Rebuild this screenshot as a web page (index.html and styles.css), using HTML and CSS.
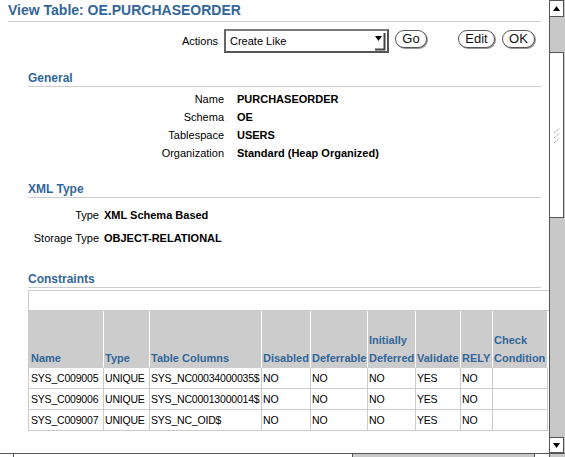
FILE: index.html
```html
<!DOCTYPE html>
<html>
<head>
<meta charset="utf-8">
<title>View Table: OE.PURCHASEORDER</title>
<link rel="stylesheet" href="styles.css">
</head>
<body>
<div class="window">
  <div class="page">
    <h1 class="title">View Table: OE.PURCHASEORDER</h1>

    <div class="actions">
      <span class="actions-label">Actions</span>
      <div class="select">
        <span>Create Like</span>
        <svg class="select-arrow" width="12" height="20" viewBox="0 0 12 20">
          <path d="M1 5 L8 5 L4.5 10 Z" fill="#000"/>
          <path d="M10.5 2 L10.5 18.5 L1 18.5" fill="none" stroke="#444" stroke-width="2"/>
        </svg>
      </div>
      <button class="btn btn-go">Go</button>
      <button class="btn btn-edit">Edit</button>
      <button class="btn btn-ok">OK</button>
    </div>

    <section class="section general">
      <h2 class="section-title">General</h2>
      <div class="props props-general">
        <div class="label">Name</div><div class="value">PURCHASEORDER</div>
        <div class="label">Schema</div><div class="value">OE</div>
        <div class="label">Tablespace</div><div class="value">USERS</div>
        <div class="label">Organization</div><div class="value">Standard (Heap Organized)</div>
      </div>
    </section>

    <section class="section xml">
      <h2 class="section-title">XML Type</h2>
      <div class="props props-xml">
        <div class="label">Type</div><div class="value">XML Schema Based</div>
        <div class="label">Storage Type</div><div class="value">OBJECT-RELATIONAL</div>
      </div>
    </section>

    <section class="section constraints">
      <h2 class="section-title">Constraints</h2>
      <div class="table-bar"></div>
      <table class="grid">
        <thead>
          <tr>
            <th class="c1">Name</th>
            <th class="c2">Type</th>
            <th class="c3">Table Columns</th>
            <th class="c4">Disabled</th>
            <th class="c5">Deferrable</th>
            <th class="c6">Initially Deferred</th>
            <th class="c7">Validate</th>
            <th class="c8">RELY</th>
            <th class="c9">Check Condition</th>
          </tr>
        </thead>
        <tbody>
          <tr><td>SYS_C009005</td><td>UNIQUE</td><td>SYS_NC00034000035$</td><td>NO</td><td>NO</td><td>NO</td><td>YES</td><td>NO</td><td></td></tr>
          <tr><td>SYS_C009006</td><td>UNIQUE</td><td>SYS_NC00013000014$</td><td>NO</td><td>NO</td><td>NO</td><td>YES</td><td>NO</td><td></td></tr>
          <tr><td>SYS_C009007</td><td>UNIQUE</td><td>SYS_NC_OID$</td><td>NO</td><td>NO</td><td>NO</td><td>YES</td><td>NO</td><td></td></tr>
        </tbody>
      </table>
    </section>
  </div>

  <div class="vscroll">
    <div class="sb-btn sb-up">
      <svg width="7" height="5" viewBox="0 0 7 5"><path d="M3.5 0 L7 5 L0 5 Z" fill="#000"/></svg>
    </div>
    <div class="sb-gap"></div>
    <div class="sb-thumb">
      <svg width="8" height="16" viewBox="0 0 8 16">
        <path d="M1 6 L7 1 M1 11 L7 6 M1 16 L7 11" stroke="#888" stroke-width="1" stroke-dasharray="1 1" fill="none"/>
      </svg>
    </div>
    <div class="sb-track"></div>
    <div class="sb-btn sb-down">
      <svg width="7" height="5" viewBox="0 0 7 5"><path d="M0 0 L7 0 L3.5 5 Z" fill="#000"/></svg>
    </div>
  </div>

  <div class="hscroll">
    <div class="hs-btn hs-left"></div>
    <div class="hs-thumb"></div>
    <div class="hs-track"></div>
    <div class="hs-btn hs-right"></div>
  </div>
  <div class="corner"></div>
</div>
</body>
</html>
```

FILE: styles.css
```css
* { box-sizing: border-box; }

html, body {
  margin: 0;
  padding: 0;
}

body {
  width: 565px;
  height: 457px;
  overflow: hidden;
  background: #fff;
  font-family: "Liberation Sans", Arial, sans-serif;
  color: #000;
}

.window {
  display: grid;
  grid-template-columns: 549px 16px;
  grid-template-rows: 453px 4px;
  width: 565px;
  height: 457px;
}

.page {
  grid-column: 1;
  grid-row: 1;
  overflow: hidden;
  padding: 2px 8px 0 8px;
}

.title {
  margin: 0;
  font-size: 14px;
  line-height: 16px;
  font-weight: bold;
  color: #336699;
  padding-bottom: 3px;
  border-bottom: 1px solid #ccc;
}

/* Actions row */
.actions {
  display: flex;
  justify-content: flex-end;
  align-items: flex-start;
  margin-top: 7px;
  padding-right: 6px;
  height: 24px;
}

.actions-label {
  font-size: 11px;
  line-height: 24px;
}

.select {
  margin-left: 6px;
  width: 165px;
  height: 24px;
  border: 2px solid #555;
  border-top-color: #7a7a7a;
  border-left-color: #666;
  display: flex;
  align-items: center;
  justify-content: space-between;
  padding: 0 1px 0 4px;
  font-size: 11px;
  background: #fff;
}

.select-arrow { display: block; }

.btn {
  margin-top: 1px;
  height: 18px;
  border: 1px solid #555;
  border-radius: 9px;
  background: #fff;
  font-family: "Liberation Sans", Arial, sans-serif;
  font-size: 13px;
  line-height: 16px;
  padding: 0;
  color: #111;
  box-shadow: 1px 1px 0 #999;
}

.btn-go { margin-left: 6px; width: 32px; }
.btn-edit { margin-left: 31px; width: 37px; }
.btn-ok { margin-left: 7px; width: 33px; }

/* Sections */
.section { margin-left: 20px; }

.section-title {
  margin: 0;
  font-size: 12px;
  line-height: 14px;
  font-weight: bold;
  color: #336699;
  padding-top: 1px;
  padding-bottom: 1px;
  border-bottom: 1px solid #ccc;
}

.general { margin-top: 17px; }
.xml { margin-top: 19px; }
.constraints { margin-top: 21px; }

.props {
  display: grid;
  font-size: 11px;
}

.props-general {
  grid-template-columns: 196px auto;
  column-gap: 13px;
  grid-auto-rows: 18px;
  margin-top: 3px;
  line-height: 18px;
}

.props-xml {
  grid-template-columns: 71px auto;
  column-gap: 5px;
  grid-auto-rows: 23px;
  margin-top: 6px;
  line-height: 23px;
}

.label { text-align: right; white-space: nowrap; }
.value { font-weight: bold; white-space: nowrap; }

/* Constraints table */
.table-bar {
  margin-top: 2px;
  width: 540px;
  height: 21px;
  border: 1px solid #ccc;
}

.grid {
  border-collapse: separate;
  border-spacing: 0;
  table-layout: fixed;
  width: 520px;
}

.grid th {
  height: 57px;
  background: #ccc;
  color: #336699;
  font-size: 11px;
  font-weight: bold;
  line-height: 18px;
  text-align: left;
  vertical-align: bottom;
  padding: 0 0 0 1px;
  border-right: 1px solid #fff;
  border-bottom: 1px solid #ccc;
}

.grid th:first-child { border-left: 1px solid #ccc; padding-left: 2px; }

.grid td {
  height: 21px;
  font-size: 10.5px;
  letter-spacing: -0.2px;
  line-height: 20px;
  padding: 0 0 0 1px;
  border-right: 1px solid #ccc;
  border-bottom: 1px solid #ccc;
  white-space: nowrap;
  overflow: visible;
  vertical-align: middle;
}

.grid td:first-child { border-left: 1px solid #ccc; padding-left: 2px; }

.c1 { width: 76px; }
.c2 { width: 46px; }
.c3 { width: 112px; }
.c4 { width: 49px; }
.c5 { width: 57px; }
.c6 { width: 48px; }
.c7 { width: 45px; }
.c8 { width: 32px; }
.c9 { width: 55px; }

/* Vertical scrollbar */
.vscroll {
  grid-column: 2;
  grid-row: 1;
  background: #c8c8c8;
  border-left: 1px solid #555;
  display: flex;
  flex-direction: column;
}

.sb-btn {
  width: 14px;
  background: #fff;
  border: 1px solid #555;
  border-left: none;
  display: flex;
  align-items: center;
  justify-content: center;
}

.sb-up { height: 17px; }
.sb-down { height: 16px; }
.sb-gap { height: 35px; }

.sb-thumb {
  width: 14px;
  height: 166px;
  background: #fff;
  border: 1px solid #555;
  border-left: none;
  display: flex;
  align-items: center;
  justify-content: center;
}

.sb-track { flex: 1; }

/* Horizontal scrollbar (partially visible) */
.hscroll {
  grid-column: 1;
  grid-row: 2;
  display: flex;
  border-top: 1px solid #555;
  background: #c8c8c8;
}

.hs-btn {
  width: 14px;
  background: #fff;
}
.hs-left { border-right: 1px solid #555; }
.hs-right { width: 15px; border-left: 1px solid #555; }

.hs-thumb {
  width: 339px;
  background: #fff;
  border-right: 1px solid #555;
}

.hs-track { flex: 1; }

.corner {
  grid-column: 2;
  grid-row: 2;
  background: #c8c8c8;
  border-top: 1px solid #555;
  border-left: 1px solid #555;
}
```
